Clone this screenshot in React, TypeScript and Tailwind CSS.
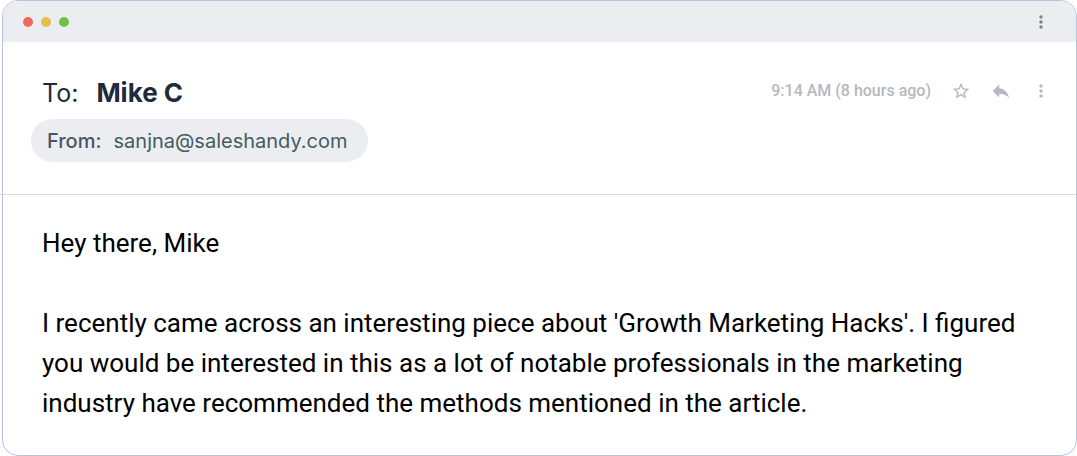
import type { ReactNode } from "react"
import { MdMoreVert, MdReply, MdStarBorder } from "react-icons/md"

interface IconButtonProps {
  label: string
  children: ReactNode
}

function IconButton({ label, children }: IconButtonProps) {
  return (
    <button type="button" aria-label={label} className="flex h-5 w-5 items-center justify-center">
      {children}
    </button>
  )
}

const message = [
  "Hey there, Mike",
  "I recently came across an interesting piece about 'Growth Marketing Hacks'. I figured you would be interested in this as a lot of notable professionals in the marketing industry have recommended the methods mentioned in the article.",
]

export default function App() {
  return (
    <main className="ml-0.5 rounded-2xl border border-[#b7c1e0] bg-white">
      {/* Window bar */}
      <div className="flex h-[41px] items-center justify-between rounded-t-[15px] bg-[#ecedf1] pr-[25px] pl-5 text-[#7f8287]">
        <div className="flex gap-2">
          <span className="h-2.5 w-2.5 rounded-full bg-[#ee6a5f]" />
          <span className="h-2.5 w-2.5 rounded-full bg-[#e2c04b]" />
          <span className="h-2.5 w-2.5 rounded-full bg-[#74c045]" />
        </div>
        <IconButton label="Window menu">
          <MdMoreVert className="shrink-0" size={20} />
        </IconButton>
      </div>

      {/* Message header */}
      <header className="pt-8 pr-[25px] pb-8 pl-7 font-['Inter',sans-serif]">
        <div className="flex items-center justify-between">
          <h1 className="flex gap-[18px] pl-[11px] text-[25px] leading-[38px] text-[#1f2a3a]">
            <span className="font-normal">To:</span>
            <span className="text-[26px] font-bold">Mike C</span>
          </h1>
          <div className="flex items-center gap-5 pb-1 text-[#b5b8c0]">
            <time className="font-['Roboto',sans-serif] text-base leading-8 font-medium">
              9:14 AM (8 hours ago)
            </time>
            <IconButton label="Star">
              <MdStarBorder className="shrink-0" size={20} />
            </IconButton>
            <IconButton label="Reply">
              <MdReply className="shrink-0" size={22} />
            </IconButton>
            <IconButton label="More options">
              <MdMoreVert className="shrink-0" size={20} />
            </IconButton>
          </div>
        </div>
        <p className="mt-[7px] inline-flex h-[43px] items-center gap-3 rounded-full bg-[#ecedf1] pr-[21px] pl-4 text-xl text-[#455a64]">
          <span className="font-medium text-[#4b5565]">From:</span>
          <span>sanjna@saleshandy.com</span>
        </p>
      </header>

      <hr className="-ml-[3px] border-[#d9dadc]" />

      <article className="space-y-10 px-[39px] pt-7 pb-8 font-['Roboto',sans-serif] text-[26px] leading-10 text-black">
        {message.map((paragraph) => (
          <p key={paragraph}>{paragraph}</p>
        ))}
      </article>
    </main>
  )
}
